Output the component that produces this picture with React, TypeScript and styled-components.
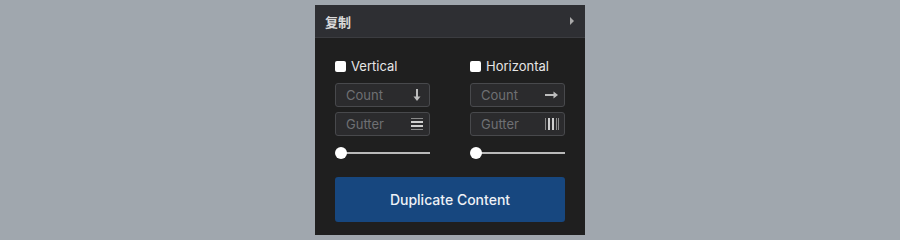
import React, { useState } from 'react'
import styled, { createGlobalStyle } from 'styled-components'

const GlobalStyle = createGlobalStyle`
  html, body {
    margin: 0;
    padding: 0;
    background: #a0a7ae;
    font-family: Inter, "Noto Sans CJK SC", "Liberation Sans", sans-serif;
  }
`

const Page = styled.div`
  width: 900px;
  height: 240px;
  display: flex;
  justify-content: center;
  padding-top: 5px;
  box-sizing: border-box;
`

const Panel = styled.div`
  width: 270px;
  height: 230px;
  background: #1f1f1f;
  display: flex;
  flex-direction: column;
`

const Header = styled.div`
  height: 32px;
  background: #2e2f33;
  border-bottom: 1px solid #3b3c40;
  display: flex;
  align-items: center;
  justify-content: space-between;
  padding: 0 10px;
  color: #d9d9d9;
  font-size: 13px;
  font-weight: 600;
  font-family: "Noto Sans CJK SC", sans-serif;
`

const Body = styled.div`
  flex: 1;
  padding: 20px 20px 13px;
  display: flex;
  flex-direction: column;
`

const Columns = styled.div`
  display: grid;
  grid-template-columns: 95px 95px;
  column-gap: 40px;
`

const Column = styled.div`
  display: flex;
  flex-direction: column;
`

const CheckRow = styled.label`
  display: flex;
  align-items: center;
  gap: 5px;
  height: 16px;
  margin-bottom: 9px;
  color: #e6e6e6;
  font-size: 13px;
`

const Box = styled.span`
  width: 11px;
  height: 11px;
  background: #fff;
  border-radius: 2px;
`

const Field = styled.div`
  height: 24px;
  box-sizing: border-box;
  border: 1px solid #48494c;
  border-radius: 3px;
  background: #2b2b2d;
  display: flex;
  align-items: center;
  justify-content: space-between;
  padding: 0 4px 0 10px;
  margin-bottom: 5px;
  color: #6f7073;
  font-size: 13px;
`

const SliderRow = styled.div`
  position: relative;
  height: 12px;
  margin-top: 6px;
  display: flex;
  align-items: center;
`

const Track = styled.div`
  flex: 1;
  height: 2px;
  margin-left: 6px;
  background: #b9b9b9;
`

const Thumb = styled.div`
  position: absolute;
  left: 0;
  top: 0;
  width: 12px;
  height: 12px;
  border-radius: 50%;
  background: #fff;
`

const Button = styled.button`
  margin-top: 18px;
  height: 45px;
  width: 100%;
  border: none;
  border-radius: 3px;
  background: #17477f;
  color: #eef1f6;
  font-family: Inter, "Liberation Sans", sans-serif;
  font-size: 14px;
  font-weight: 500;
`

const ArrowDown = () => (
  <svg width="16" height="16" viewBox="0 0 16 16">
    <path d="M8 2v9" stroke="#bdbdbd" strokeWidth="2" />
    <path d="M4.5 9.5L8 14l3.5-4.5z" fill="#bdbdbd" />
  </svg>
)

const ArrowRight = () => (
  <svg width="16" height="16" viewBox="0 0 16 16">
    <path d="M1 8h9" stroke="#bdbdbd" strokeWidth="2" />
    <path d="M9.5 4.5L14 8l-4.5 3.5z" fill="#bdbdbd" />
  </svg>
)

const GutterV = () => (
  <svg width="16" height="16" viewBox="0 0 16 16">
    <rect x="2" y="2" width="12" height="1" fill="#8a8a8a" />
    <rect x="2" y="5" width="12" height="2" fill="#cfcfcf" />
    <rect x="2" y="9" width="12" height="2" fill="#cfcfcf" />
    <rect x="2" y="13" width="12" height="1" fill="#8a8a8a" />
  </svg>
)

const GutterH = () => (
  <svg width="16" height="16" viewBox="0 0 16 16">
    <rect x="1" y="2" width="1" height="12" fill="#8a8a8a" />
    <rect x="4" y="2" width="2" height="12" fill="#cfcfcf" />
    <rect x="8" y="2" width="2" height="12" fill="#cfcfcf" />
    <rect x="12" y="2" width="1" height="12" fill="#8a8a8a" />
    <rect x="14" y="2" width="1" height="12" fill="#8a8a8a" />
  </svg>
)

const Caret = () => (
  <svg width="6" height="10" viewBox="0 0 6 10">
    <path d="M1 1l4 4-4 4z" fill="#a9a9a9" />
  </svg>
)

interface AxisProps {
  label: string
  countIcon: React.ReactNode
  gutterIcon: React.ReactNode
}

const Axis = ({ label, countIcon, gutterIcon }: AxisProps) => (
  <Column>
    <CheckRow>
      <Box />
      {label}
    </CheckRow>
    <Field>
      Count
      {countIcon}
    </Field>
    <Field>
      Gutter
      {gutterIcon}
    </Field>
    <SliderRow>
      <Track />
      <Thumb />
    </SliderRow>
  </Column>
)

const App = () => {
  const [open] = useState(false)
  return (
    <Page>
      <GlobalStyle />
      <Panel>
        <Header>
          <span>复制</span>
          {!open && <Caret />}
        </Header>
        <Body>
          <Columns>
            <Axis label="Vertical" countIcon={<ArrowDown />} gutterIcon={<GutterV />} />
            <Axis label="Horizontal" countIcon={<ArrowRight />} gutterIcon={<GutterH />} />
          </Columns>
          <Button>Duplicate Content</Button>
        </Body>
      </Panel>
    </Page>
  )
}

export default App
